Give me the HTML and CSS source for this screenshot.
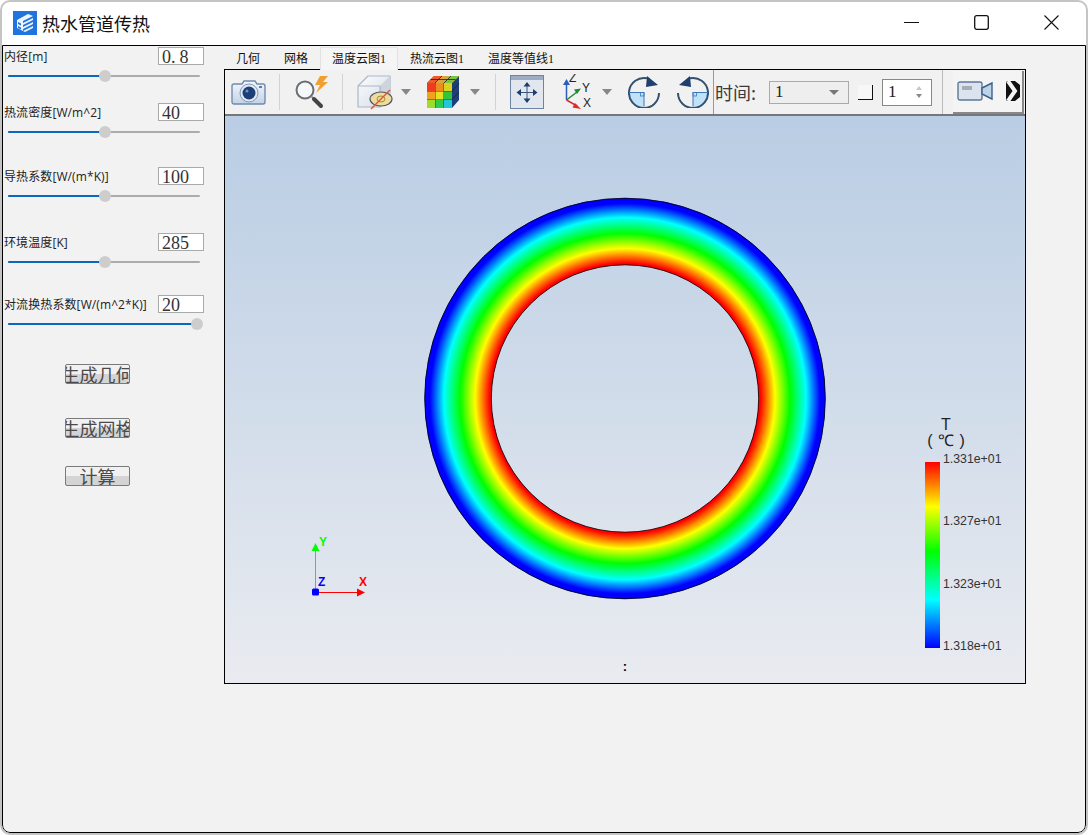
FILE: index.html
```html
<!DOCTYPE html>
<html lang="zh">
<head>
<meta charset="utf-8">
<title>热水管道传热</title>
<link rel="stylesheet" href="styles.css">
</head>
<body>
<div class="window">
  <header class="titlebar">
    <svg class="app-icon" width="24" height="24" viewBox="0 0 24 24">
      <rect width="24" height="24" fill="#1f74e0"/>
      <path d="M4 9 15 3l5 2-10 5v2l10-5v2L10 14v2l10-5v2l-10 5v2l10-5v2l-8 4-8-4z" fill="#fff" opacity=".92"/>
      <path d="M5 11l3 1.500v2L5 13zM5 15l3 1.500v2L5 17z" fill="#1f74e0"/>
    </svg>
    <div class="title">热水管道传热</div>
    <div class="controls">
      <svg width="15" height="15" viewBox="0 0 15 15"><path d="M0 7.500h15" stroke="#111" fill="none"/></svg>
      <svg width="15" height="15" viewBox="0 0 15 15"><rect x=".7" y=".7" width="13.600" height="13.600" rx="2" stroke="#111" stroke-width="1.300" fill="none"/></svg>
      <svg width="15" height="15" viewBox="0 0 15 15"><path d="M.5.500l14 14M14.500.500l-14 14" stroke="#111" stroke-width="1.100" fill="none"/></svg>
    </div>
  </header>
  <div class="content">
    <aside class="sidebar">
      <section class="param">
        <div class="param-head"><span class="label">内径[m]</span><div class="field">0.<span class="wide-gap">8</span></div></div>
        <div class="slider"><div class="fill"></div><div class="knob"></div></div>
      </section>
      <section class="param gap-a">
        <div class="param-head"><span class="label">热流密度[W/m^2]</span><div class="field">40</div></div>
        <div class="slider"><div class="fill"></div><div class="knob"></div></div>
      </section>
      <section class="param gap-b">
        <div class="param-head"><span class="label">导热系数[W/(m*K)]</span><div class="field">100</div></div>
        <div class="slider"><div class="fill"></div><div class="knob"></div></div>
      </section>
      <section class="param gap-c">
        <div class="param-head"><span class="label">环境温度[K]</span><div class="field">285</div></div>
        <div class="slider"><div class="fill"></div><div class="knob"></div></div>
      </section>
      <section class="param gap-d">
        <div class="param-head"><span class="label">对流换热系数[W/(m^2*K)]</span><div class="field">20</div></div>
        <div class="slider slider-full"><div class="fill"></div><div class="knob"></div></div>
      </section>
      <div class="actions">
        <button class="btn">生成几何</button>
        <button class="btn">生成网格</button>
        <button class="btn btn-close">计算</button>
      </div>
    </aside>
    <main class="main">
      <nav class="tabs">
        <span class="tab">几何</span>
        <span class="tab">网格</span>
        <span class="tab active">温度云图1</span>
        <span class="tab">热流云图1</span>
        <span class="tab">温度等值线1</span>
      </nav>
      <div class="viewer">
        <div class="toolbar">
          <svg class="ic i-cam" width="36" height="30" viewBox="0 0 36 30">
            <defs><linearGradient id="cb" x1="0" y1="0" x2="0" y2="1"><stop offset="0" stop-color="#f4f7fb"/><stop offset="1" stop-color="#c3d2e6"/></linearGradient></defs>
            <path d="M3 7h8l2-3h11l2 3h6a2 2 0 0 1 2 2v16a2 2 0 0 1-2 2H3a2 2 0 0 1-2-2V9a2 2 0 0 1 2-2z" fill="url(#cb)" stroke="#6f8cae" stroke-width="1.400"/>
            <circle cx="18" cy="16" r="9" fill="#dfe8f3" stroke="#7f99b8"/>
            <circle cx="18" cy="16" r="6.500" fill="#1d3f78"/>
            <circle cx="16" cy="14" r="1.500" fill="#6f93c6"/>
            <rect x="28" y="9" width="3" height="2" fill="#5f7da0"/>
          </svg>
          <i class="sep sep-a"></i>
          <svg class="ic i-zoom" width="38" height="34" viewBox="0 0 38 34">
            <circle cx="11" cy="15" r="8.500" fill="#f5f7fa" stroke="#6a6f76" stroke-width="2"/>
            <path d="M17.500 21.500l2 2" stroke="#999" stroke-width="2"/>
            <path d="M20 24l7 7" stroke="#444" stroke-width="4" stroke-linecap="round"/>
            <path d="M26 1l-5 9h5l-4 8 12-11h-5l5-6z" fill="#f0a030"/>
          </svg>
          <i class="sep sep-b"></i>
          <svg class="ic i-cube" width="36" height="36" viewBox="0 0 36 36">
            <defs><linearGradient id="cf" x1="0" y1="0" x2="1" y2="1"><stop offset="0" stop-color="#fbfcfd"/><stop offset="1" stop-color="#d5dce6"/></linearGradient></defs>
            <path d="M1 12 11 2h22v20l-10 11H1z" fill="url(#cf)" stroke="#aab8c9" stroke-width="1.200" stroke-linejoin="round"/>
            <path d="M23 12l10-10v20l-10 11z" fill="#cdd4dc"/>
            <path d="M1 12h22v21" fill="none" stroke="#aab8c9" stroke-width="1.200"/>
            <ellipse cx="24" cy="25" rx="11" ry="7" fill="#ecdc9e" stroke="#556" stroke-width="1.200"/>
            <ellipse cx="24" cy="25" rx="4" ry="3" fill="none" stroke="#a58a3a"/>
            <path d="M14 35 33 16" stroke="#e2562b" stroke-width="1.400"/>
          </svg>
          <i class="caret caret-a"></i>
          <svg class="ic i-cube2" width="34" height="34" viewBox="0 0 34 34">
            <path d="M1 8 8 1h25v24l-7 8H1z" fill="#1d3f7a"/>
            <path d="M1 8 8 1h25l-7 7z" fill="#d9a53e"/>
            <path d="M1 8 8 1h8l-7 7z" fill="#ef5a2a"/><path d="M18 8l7-7h8l-7 7z" fill="#7cc53a"/>
            <rect x="1" y="8" width="8" height="8" fill="#ef3b22"/><rect x="9.500" y="8" width="8" height="8" fill="#f08c1e"/><rect x="18" y="8" width="8" height="8" fill="#d9d21e"/>
            <rect x="1" y="16.500" width="8" height="8" fill="#f0a21e"/><rect x="9.500" y="16.500" width="8" height="8" fill="#e8e022"/><rect x="18" y="16.500" width="8" height="8" fill="#32c43c"/>
            <rect x="1" y="25" width="8" height="8" fill="#9fdc2a"/><rect x="9.500" y="25" width="8" height="8" fill="#2ecb4c"/><rect x="18" y="25" width="8" height="8" fill="#22c6d8"/>
            <path d="M9 8l7-7M18 8l7-7M4.500 4.500h25M26 16l7-7.500M26 24.500l7-7.500" stroke="#123" stroke-width=".8" fill="none"/>
          </svg>
          <i class="caret caret-b"></i>
          <i class="sep sep-c"></i>
          <svg class="ic i-fit" width="34" height="34" viewBox="0 0 34 34">
            <rect x=".5" y=".5" width="33" height="33" fill="#e2e7ef" stroke="#6d84a3"/>
            <rect x="1" y="1" width="32" height="4" fill="#9cacc4"/>
            <path d="M9 17.500h16M17 9.500v16" stroke="#37567f" stroke-width="1"/>
            <path d="M17 7l-3.500 4.500h7zM17 28l-3.500-4.500h7zM6.500 17.500l4.500-3.500v7zM27.500 17.500 23 14v7z" fill="#1b3f6e"/>
          </svg>
          <svg class="ic i-axes" width="30" height="36" viewBox="0 0 30 36">
            <path d="M3.500 26V9" stroke="#2a5fb8" stroke-width="1.500"/><path d="M3.500 5l-3.500 6h7z" fill="#2a5fb8"/>
            <path d="M3.500 26 14 18" stroke="#1c8c3c" stroke-width="1.500"/><path d="M18 14.500l-7 1 3 4.500z" fill="#1c8c3c"/>
            <path d="M3.500 26 14 32" stroke="#e02a2a" stroke-width="1.500"/><path d="M18 35l-6-6-2.500 4.500z" fill="#e02a2a"/>
            <text x="6" y="8" class="axis-tag">Z</text><text x="19" y="18" class="axis-tag">Y</text><text x="20" y="33" class="axis-tag">X</text>
          </svg>
          <i class="caret caret-c"></i>
          <svg class="ic i-rot" width="32" height="32" viewBox="0 0 32 32">
            <path d="M1 17h15v14A15 15 0 0 1 1 17z" fill="#bfe2f8"/>
            <path d="M19 2.300A15 15 0 1 0 31 17" fill="none" stroke="#34506f" stroke-width="2"/>
            <path d="M1 16.500h15v14" fill="none" stroke="#3a78bb" stroke-width="1"/>
            <rect x="12.500" y="16.500" width="3.500" height="3.500" fill="none" stroke="#3a78bb" stroke-width=".8"/>
            <path d="M19 0l11 9-12 2z" fill="#1f3f6e"/>
          </svg>
          <svg class="ic i-rot2" width="32" height="32" viewBox="0 0 32 32">
            <path d="M31 17H16v14A15 15 0 0 0 31 17z" fill="#bfe2f8"/>
            <path d="M13 2.300A15 15 0 1 1 1 17" fill="none" stroke="#34506f" stroke-width="2"/>
            <path d="M31 16.500H16v14" fill="none" stroke="#3a78bb" stroke-width="1"/>
            <rect x="16" y="16.500" width="3.500" height="3.500" fill="none" stroke="#3a78bb" stroke-width=".8"/>
            <path d="M13 0 2 9l12 2z" fill="#1f3f6e"/>
          </svg>
          <i class="sep sep-d"></i>
          <span class="time-label">时间:</span>
          <div class="combo"><span>1</span><i class="caret caret-combo"></i></div>
          <i class="check"></i>
          <div class="spin"><span>1</span><svg width="8" height="16" viewBox="0 0 8 16"><path d="M4 2 1 6h6z" fill="#c8c8c8"/><path d="M4 14 1 10h6z" fill="#8a8a8a"/></svg></div>
          <i class="sep sep-e"></i>
          <div class="tool-more">
            <svg width="36" height="20" viewBox="0 0 36 20">
              <rect x="1" y="1" width="24" height="18" rx="2" fill="#dbe3ee" stroke="#5f7799" stroke-width="1.400"/>
              <rect x="5" y="5" width="10" height="4" fill="#a4adb8"/>
              <path d="M25 7l10-5v16l-10-5z" fill="#bcd3ea" stroke="#3d5f88" stroke-width="1.400"/>
            </svg>
            <svg class="chev" width="14" height="20" viewBox="0 0 14 20"><rect width="14" height="20" rx="2" fill="#111"/><path d="M2 0 9 10 2 20" fill="none" stroke="#f4f4f4" stroke-width="4"/><path d="M9 0h5v4zM9 20h5v-4z" fill="#f4f4f4"/></svg>
          </div>
        </div>
        <div class="viewport">
          <svg class="scene" width="800" height="567" viewBox="225 116 800 567">
            <defs>
              <radialGradient id="ring" gradientUnits="userSpaceOnUse" cx="625" cy="398.500" r="200.500">
                <stop offset=".668" stop-color="#f00"/>
                <stop offset=".675" stop-color="#f00"/>
                <stop offset=".748" stop-color="#ff0"/>
                <stop offset=".823" stop-color="#0f0"/>
                <stop offset=".903" stop-color="#0ff"/>
                <stop offset=".973" stop-color="#00f"/>
                <stop offset="1" stop-color="#00f"/>
              </radialGradient>
            </defs>
            <circle cx="625" cy="398.500" r="167" fill="none" stroke="url(#ring)" stroke-width="67"/>
            <circle cx="625" cy="398.500" r="200.300" fill="none" stroke="#000" stroke-width=".8"/>
            <circle cx="625" cy="398.500" r="133.700" fill="none" stroke="#000" stroke-width=".8"/>
            <path d="M315.500 592v-41" stroke="#0f0" fill="none"/>
            <path d="M315.500 543l-4 8h8z" fill="#0f0"/>
            <path d="M316 592.500h41" stroke="#f00" fill="none"/>
            <path d="M365 592.500l-8-4v8z" fill="#f00"/>
            <rect x="312" y="588.500" width="7" height="7" rx="1.500" fill="#00f"/>
            <text x="319" y="546" class="triad t-y">Y</text>
            <text x="359" y="586" class="triad t-x">X</text>
            <text x="318" y="586" class="triad t-z">Z</text>
            <text x="625" y="671" class="scene-colon">:</text>
          </svg>
          <div class="legend">
            <div class="legend-title">T<br>( ℃ )</div>
            <div class="legend-body">
              <div class="legend-bar"></div>
              <div class="legend-ticks">
                <span>1.331e+01</span><span>1.327e+01</span><span>1.323e+01</span><span>1.318e+01</span>
              </div>
            </div>
          </div>
        </div>
      </div>
    </main>
  </div>
</div>
</body>
</html>
```

FILE: styles.css
```css
* { box-sizing: border-box; }
html, body { margin: 0; height: 100%; background: #fff; overflow: hidden; }
body { font-family: "Noto Sans CJK SC", "Liberation Sans", sans-serif; color: #222; }

.window {
  width: 1088px; height: 835px;
  border: 2px solid #c4c4c4;
  border-radius: 10px;
  display: flex; flex-direction: column;
  background: #fff;
  overflow: hidden;
}
.titlebar { height: 43px; flex: none; display: flex; align-items: center; padding-left: 11px; }
.app-icon { flex: none; margin-top: -1px; }
.title { margin-left: 5px; font-size: 18px; color: #111; line-height: 24px; margin-top: -1px; }
.controls { margin-left: auto; display: flex; gap: 55px; padding-right: 27px; align-items: center; margin-top: -2px; }
.controls svg { display: block; }

.content { flex: 1; display: flex; background: #f2f2f2; border: 1px solid #000; border-radius: 0 0 8px 8px; min-height: 0; }

.sidebar { width: 221px; flex: none; padding-top: 1px; }
.param-head { display: flex; justify-content: space-between; align-items: center; height: 18px; padding-left: 1px; width: 201px; }
.label { font-family: "Open Sans", "Noto Sans CJK SC", sans-serif; font-size: 12px; color: #222; white-space: nowrap; line-height: 18px; margin-top: 1px; letter-spacing: .1px; }
.field {
  width: 46px; height: 18px; background: #fff; border: 1px solid #aaa;
  font-family: "Liberation Serif", serif; font-size: 18px; line-height: 18px; padding-left: 3px; color: #333;
}
.wide-gap { margin-left: 4px; }
.slider { position: relative; height: 2px; width: 192px; margin: 10px 0 0 5px; background: #acacac; border-radius: 1px; }
.fill { height: 2px; width: 97px; background: #0c68bd; border-radius: 1px; }
.slider-full .fill { width: 189px; }
.knob { position: absolute; left: 91px; top: -5px; width: 12px; height: 12px; border-radius: 50%; background: #cdcdcd; }
.slider-full .knob { left: 183px; }
.gap-a { margin-top: 26px; }
.gap-b { margin-top: 34px; }
.gap-c { margin-top: 36px; }
.gap-d { margin-top: 32px; }

.actions { display: flex; flex-direction: column; align-items: flex-start; gap: 34px; margin: 39px 0 0 62px; }
.btn {
  width: 65px; height: 20px; padding: 0; border: 1px solid #7a7a7a; border-radius: 2px;
  background: linear-gradient(#f1f1f1 0 50%, #d4d4d4 50% 100%);
  font-family: "Noto Sans CJK SC", sans-serif; font-weight: 400; font-size: 18px; line-height: 16px; color: #4a4a4a;
  overflow: hidden; white-space: nowrap; display: flex; justify-content: center; align-items: center;
}
.btn-close { margin-top: -6px; }

.main { flex: 1; min-width: 0; display: flex; flex-direction: column; padding-top: 1px; }
.tabs { display: flex; height: 22px; font-family: "Liberation Serif", "Noto Sans CJK SC", sans-serif; font-size: 12px; color: #111; align-items: stretch; position: relative; z-index: 1; }
.tab { padding: 0 12px; line-height: 24px; white-space: nowrap; }
.tab.active { padding: 0 11px; border: 1px solid #e2e2e2; border-bottom: 0; background: #f5f5f5; height: 23px; line-height: 22px; }

.viewer { width: 802px; height: 615px; border: 1px solid #000; background: #f0f0f0; display: flex; flex-direction: column; }
.toolbar { height: 46px; flex: none; display: flex; align-items: center; padding-left: 6px; border-bottom: 2px solid #777; background: #f1f1f1; }
.ic { flex: none; display: block; }
.sep { flex: none; width: 1px; height: 36px; background: #d2d2d2; }
.sep-a { margin: 0 14px 0 12px; }
.sep-b { margin: 0 14px 0 10px; }
.sep-c { margin: 0 14px 0 15px; }
.sep-d { margin: 0 1px 0 4px; background: #999; height: 44px; }
.sep-e { margin: 0 10px; height: 44px; background: #bbb; }
.caret { flex: none; width: 0; height: 0; border: 5px solid transparent; border-top: 6px solid #888; border-bottom: 0; }
.caret-a { margin: 0 15px 0 8px; }
.caret-b { margin: 0 0 0 10px; }
.caret-c { margin: 0 16px 0 9px; }
.i-axes { margin-left: 19px; }
.i-rot2 { margin-left: 17px; }
.time-label { font-size: 18px; color: #3a3a3a; white-space: nowrap; width: 43px; flex: none; line-height: 24px; }
.combo { flex: none; width: 80px; height: 23px; margin-left: 11px; border: 1px solid #aaa; background: #eee; display: flex; align-items: center; justify-content: space-between; padding: 0 9px 0 5px; font-family: "Liberation Serif", serif; font-size: 17px; color: #222; }
.caret-combo { margin: 0; border-width: 5px; border-top-width: 5px; border-bottom: 0; border-top-color: #777; }
.check { flex: none; width: 15px; height: 15px; margin-left: 9px; border-right: 1px solid #111; border-bottom: 1px solid #111; background: #f7f7f7; }
.spin { flex: none; width: 50px; height: 27px; margin-left: 9px; border: 1px solid #888; background: #fff; display: flex; align-items: center; justify-content: space-between; padding: 0 8px 0 5px; font-family: "Liberation Serif", serif; font-size: 17px; color: #222; }
.tool-more { flex: none; display: flex; align-items: center; gap: 13px; width: 71px; height: 43px; padding-left: 4px; border-right: 2px solid #888; border-bottom: 2px solid #888; background: #f4f4f4; overflow: hidden; }
.tool-more svg { flex: none; }
.axis-tag { font: 12px "Liberation Sans", sans-serif; fill: #222; }

.viewport { flex: 1; position: relative; background: linear-gradient(#b9cde4, #e9ebf0); overflow: hidden; }
.scene { position: absolute; left: 0; top: 0; display: block; }
.triad { font: bold 12px "Liberation Sans", sans-serif; }
.t-y { fill: #0f0; } .t-x { fill: #f00; } .t-z { fill: #00f; }
.scene-colon { font: bold 13px "Liberation Sans", sans-serif; fill: #000; text-anchor: middle; }

.legend { position: absolute; left: 700px; top: 301px; width: 90px; }
.legend-title { font: 16px/16px "Liberation Sans", sans-serif; color: #222; text-align: center; width: 42px; height: 45px; word-spacing: 1px; }
.legend-body { display: flex; gap: 3px; }
.legend-bar { width: 15px; height: 186px; background: linear-gradient(#f00 0, #ff0 24%, #0f0 48%, #0ff 74%, #00f 100%); }
.legend-ticks { display: flex; flex-direction: column; justify-content: space-between; height: 201px; margin-top: -10px; font: 12.300px/14px "Liberation Sans", sans-serif; color: #333; }
```
